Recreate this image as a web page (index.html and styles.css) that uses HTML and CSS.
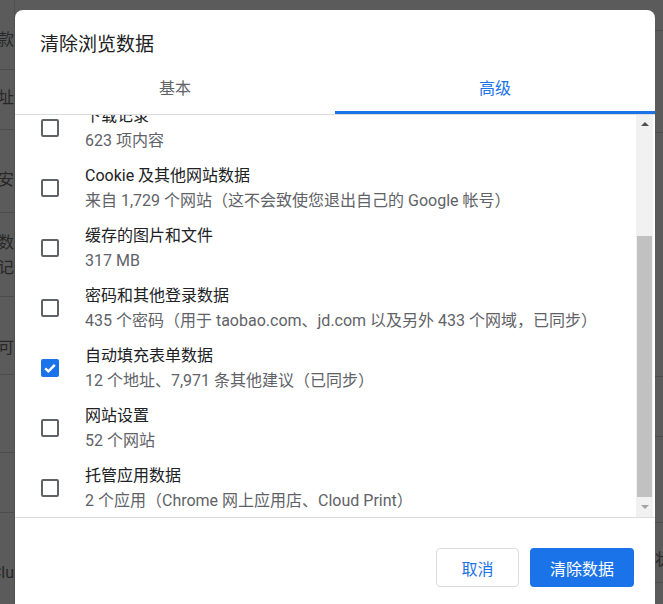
FILE: index.html
```html
<!DOCTYPE html>
<html lang="zh-CN">
<head>
    <meta charset="UTF-8">
    <meta name="viewport" content="width=device-width, initial-scale=1.0">
    <title>清除浏览数据</title>
    <link rel="stylesheet" href="styles.css">
</head>
<body>
    <!-- dimmed settings page behind the dialog -->
    <div class="page">
        <div class="page-left">
            <div class="bg-row r1"><span>付款</span></div>
            <div class="bg-row r2"><span>地址</span></div>
            <div class="bg-row r3"><span>安</span></div>
            <div class="bg-row r4"><span>数</span><span>记</span></div>
            <div class="bg-row r5"><span>可</span></div>
            <div class="bg-row r6"></div>
            <div class="bg-row r7"></div>
            <div class="bg-row r8"><span>Clu</span></div>
        </div>
        <div class="page-right">
            <div class="bg-row s1"></div>
            <div class="bg-row s2"></div>
            <div class="bg-row s3"></div>
            <div class="bg-row s4"></div>
            <div class="bg-row s5"></div>
            <div class="bg-row s6"><span>状</span></div>
        </div>
    </div>

    <div class="dialog">
        <div class="dialog-title">清除浏览数据</div>

        <div class="tabs">
            <div class="tab">基本</div>
            <div class="tab active">高级</div>
        </div>

        <div class="list">
            <div class="items">
                <div class="items-inner">
                    <div class="item">
                        <span class="checkbox"></span>
                        <div class="item-text">
                            <div class="item-title">下载记录</div>
                            <div class="item-sub">623 项内容</div>
                        </div>
                    </div>
                    <div class="item">
                        <span class="checkbox"></span>
                        <div class="item-text">
                            <div class="item-title">Cookie 及其他网站数据</div>
                            <div class="item-sub">来自 1,729 个网站（这不会致使您退出自己的 Google 帐号）</div>
                        </div>
                    </div>
                    <div class="item">
                        <span class="checkbox"></span>
                        <div class="item-text">
                            <div class="item-title">缓存的图片和文件</div>
                            <div class="item-sub">317 MB</div>
                        </div>
                    </div>
                    <div class="item">
                        <span class="checkbox"></span>
                        <div class="item-text">
                            <div class="item-title">密码和其他登录数据</div>
                            <div class="item-sub">435 个密码（用于 taobao.com、jd.com 以及另外 433 个网域，已同步）</div>
                        </div>
                    </div>
                    <div class="item">
                        <span class="checkbox checked">
                            <svg viewBox="0 0 18 18" width="18" height="18"><path d="M4.2 9.3l3.2 3.1 6.4-6.6" fill="none" stroke="#fff" stroke-width="2.4"/></svg>
                        </span>
                        <div class="item-text">
                            <div class="item-title">自动填充表单数据</div>
                            <div class="item-sub">12 个地址、7,971 条其他建议（已同步）</div>
                        </div>
                    </div>
                    <div class="item">
                        <span class="checkbox"></span>
                        <div class="item-text">
                            <div class="item-title">网站设置</div>
                            <div class="item-sub">52 个网站</div>
                        </div>
                    </div>
                    <div class="item">
                        <span class="checkbox"></span>
                        <div class="item-text">
                            <div class="item-title">托管应用数据</div>
                            <div class="item-sub">2 个应用（Chrome 网上应用店、Cloud Print）</div>
                        </div>
                    </div>
                </div>
            </div>

            <div class="scrollbar">
                <div class="sb-arrow up"><span class="tri-up"></span></div>
                <div class="sb-track"><div class="sb-thumb"></div></div>
                <div class="sb-arrow down"><span class="tri-down"></span></div>
            </div>
        </div>

        <div class="footer">
            <button class="btn btn-cancel">取消</button>
            <button class="btn btn-primary">清除数据</button>
        </div>
    </div>
</body>
</html>
```

FILE: styles.css
```css
body {
    margin: 0;
    width: 663px;
    height: 604px;
    overflow: hidden;
    font-family: Roboto, "Noto Sans CJK SC", sans-serif;
}

/* background page */
.page {
    display: flex;
    justify-content: space-between;
    height: 604px;
    background: #5b5b5b;
    color: #272727;
    font-size: 16px;
}
.page-left {
    width: 14px;
    border-right: 1px solid #505050;
    overflow: hidden;
}
.page-right {
    width: 8px;
    overflow: hidden;
}
.bg-row {
    display: flex;
    flex-direction: column;
    align-items: flex-end;
    box-sizing: border-box;
    border-bottom: 1px solid #4c4c4c;
    line-height: 22px;
    white-space: nowrap;
}
.page-right .bg-row {
    align-items: flex-start;
}
.bg-row span + span {
    margin-top: 3px;
}
.r1 { height: 70px; padding-top: 29px; }
.r2 { height: 60px; padding-top: 17px; }
.r3 { height: 83px; padding-top: 39px; }
.r4 { height: 84px; padding-top: 19px; }
.r5 { height: 78px; padding-top: 40px; }
.r6 { height: 78px; }
.r7 { height: 60px; }
.r8 { height: 91px; padding-top: 49px; border-bottom: none; }

.s1 { height: 31px; }
.s2 { height: 102px; }
.s3 { height: 244px; }
.s4 { height: 60px; }
.s5 { height: 86px; }
.s6 { height: 60px; padding-top: 26px; }

/* dialog */
.dialog {
    position: absolute;
    left: 15px;
    top: 10px;
    width: 640px;
    height: 620px;
    background: #fff;
    border-radius: 8px;
    display: flex;
    flex-direction: column;
    color: #202124;
}
.dialog-title {
    padding: 23px 0 9px 25px;
    font-size: 19px;
    line-height: 24px;
}
.tabs {
    display: flex;
    height: 48px;
    border-bottom: 1px solid #dadce0;
}
.tab {
    flex: 1;
    box-sizing: border-box;
    height: 48px;
    line-height: 46px;
    text-align: center;
    font-size: 16px;
    color: #5f6368;
    border-bottom: 3px solid transparent;
}
.tab.active {
    color: #1a73e8;
    border-bottom-color: #1a73e8;
}

.list {
    display: flex;
    height: 402px;
    border-bottom: 1px solid #dadce0;
}
.items {
    flex: 1;
    overflow: hidden;
}
.items-inner {
    margin-top: -17px;
}
.item {
    display: flex;
    align-items: center;
    height: 60px;
    padding-left: 26px;
}
.checkbox {
    flex: none;
    width: 18px;
    height: 18px;
    box-sizing: border-box;
    border: 2px solid #5f6368;
    border-radius: 2px;
}
.checkbox.checked {
    border: none;
    background: #1a73e8;
}
.checkbox svg {
    display: block;
}
.item-text {
    margin-left: 26px;
    font-size: 16px;
    white-space: nowrap;
}
.item-title {
    line-height: 22px;
    color: #202124;
}
.item-sub {
    margin-top: 3px;
    line-height: 22px;
    color: #5f6368;
}

/* classic scrollbar */
.scrollbar {
    display: flex;
    flex-direction: column;
    width: 17px;
    margin-right: 2px;
    background: #f1f1f1;
}
.sb-arrow {
    display: flex;
    align-items: center;
    justify-content: center;
}
.sb-arrow.up { height: 17px; }
.sb-arrow.down { height: 20px; }
.tri-up {
    border-left: 4px solid transparent;
    border-right: 4px solid transparent;
    border-bottom: 4px solid #505050;
}
.tri-down {
    border-left: 4px solid transparent;
    border-right: 4px solid transparent;
    border-top: 4px solid #a3a3a3;
}
.sb-track {
    flex: 1;
    display: flex;
    flex-direction: column;
    justify-content: flex-end;
}
.sb-thumb {
    height: 261px;
    margin: 0 1px;
    background: #c1c1c1;
}

.footer {
    display: flex;
    justify-content: flex-end;
    gap: 11px;
    padding: 30px 21px 0 0;
}
.btn {
    height: 39px;
    box-sizing: border-box;
    border-radius: 4px;
    font-family: Roboto, "Noto Sans CJK SC", sans-serif;
    font-size: 16px;
    cursor: pointer;
}
.btn-cancel {
    width: 83px;
    background: #fff;
    color: #1a73e8;
    border: 1px solid #dadce0;
}
.btn-primary {
    width: 104px;
    background: #1a73e8;
    color: #fff;
    border: none;
}
```
